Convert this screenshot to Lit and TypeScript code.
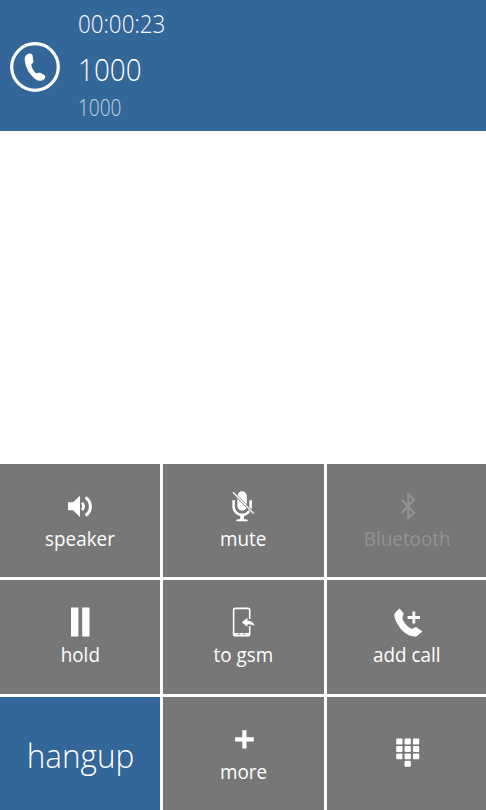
import { LitElement, html, css, svg } from 'lit';
import type { SVGTemplateResult } from 'lit';
import { customElement, property, state } from 'lit/decorators.js';
import { classMap } from 'lit/directives/class-map.js';

const ICONS: Record<string, SVGTemplateResult> = {
  speaker: svg`
    <path d="M12 14.3H17L24 7.8V28.9L17 22.2H12Z" fill="currentColor" />
    <path d="M26 14.6Q29.2 18.3 26 22" stroke="currentColor" stroke-width="2.7" />
    <path d="M29.5 9.5C36 13.4 36 23.4 29.5 27.4" stroke="currentColor" stroke-width="3" />
  `,
  mute: svg`
    <rect x="17.4" y="3.3" width="9.4" height="19.4" rx="4.7" fill="currentColor" />
    <path d="M13.6 12.3V18C13.6 29.8 30.6 29.8 30.6 18V12.3" stroke="currentColor" stroke-width="2.6" />
    <path d="M20.2 26.5H24V31.1L27.6 31.8V33.2H16.4V31.8L20.2 31.1Z" fill="currentColor" />
    <path d="M13 4.3L33.4 25.3" stroke="#777" stroke-width="2.6" />
    <path d="M13 4.3L33.6 25.5" stroke="currentColor" stroke-width="1.3" />
  `,
  bluetooth: svg`
    <path d="M18.6 11.6L31 24.7L25.4 30V6.4L31 11.6L18.6 24.9" stroke="currentColor" stroke-width="2.2" />
  `,
  hold: svg`
    <path d="M15 3.6H22.4V32.5H15ZM26.2 3.6H33.5V32.5H26.2Z" fill="currentColor" />
  `,
  gsm: svg`
    <path d="M29.7 15V6.2Q29.7 4.4 27.9 4.4H15.4Q13.6 4.4 13.6 6.2V30Q13.6 31.8 15.4 31.8H27.9Q29.7 31.8 29.7 30V22" stroke="currentColor" stroke-width="1.6" />
    <path d="M14 29.9H18.6M19.4 29.9H23.8M24.6 29.9H29.5" stroke="currentColor" stroke-width="1.6" />
    <path d="M21.8 18.3L27.4 13.8V16.4Q33 16.6 34.6 21.8Q31.8 20 27.4 20.3V22.8Z" fill="currentColor" />
  `,
  add: svg`
    <path d="M16.6 4.6L11.9 9C11 10.2 11.2 13 12.6 16.3C15.5 23.6 21.8 30.3 28.2 32.1C30.3 32.7 32.6 32.8 33.7 32.2L39.4 27.4L33 22.9L29.2 24.8C26 24.6 19.7 17.5 19.3 13.7L20.8 9.6Z" fill="currentColor" />
    <path d="M24.6 13.5H37M30.8 7.5V19.4" stroke="currentColor" stroke-width="2.8" />
  `,
  more: svg`
    <path d="M15.1 18.4H33.8M24.4 9.2V27.5" stroke="currentColor" stroke-width="4.2" />
  `,
  keypad: svg`
    ${[0, 1, 2, 3, 4, 5, 6, 7, 8, 10].map(
      (i) => svg`<rect
        x=${13.2 + (i % 3) * 8.35}
        y=${17.6 + Math.floor(i / 3) * 7.4}
        width="6.3" height="5.9" rx="1" fill="currentColor" />`
    )}
  `,
};

interface Action {
  icon?: string;
  label: string;
  kind?: 'hangup' | 'disabled';
}

@customElement('call-tile')
export class CallTile extends LitElement {
  @property({ type: String })
  icon = '';

  @property({ type: String })
  label = '';

  @property({ type: String })
  kind = '';

  static styles = css`
    :host {
      display: block;
      min-width: 0;
    }

    .tile {
      box-sizing: border-box;
      width: 100%;
      height: 100%;
      padding: 24px 0 0;
      border: 0;
      display: flex;
      flex-direction: column;
      align-items: center;
      background: #777;
      color: #fff;
      font-family: 'Open Sans', 'Noto Sans', sans-serif;
    }

    .tile.disabled {
      color: #929292;
    }

    .tile.hangup {
      padding: 3px 0 0;
      justify-content: center;
      background: #369;
    }

    .icon {
      display: block;
      flex: none;
      overflow: visible;
    }

    .label {
      font-size: 20.5px;
      line-height: 28px;
      white-space: nowrap;
      transform: scaleX(0.92);
    }

    .hangup .label {
      font-size: 32.5px;
      font-weight: 330;
      line-height: 44px;
      transform: scaleX(0.97);
    }
  `;

  render() {
    return html`
      <button
        class=${classMap({
          tile: true,
          hangup: this.kind === 'hangup',
          disabled: this.kind === 'disabled',
        })}
        ?disabled=${this.kind === 'disabled'}
      >
        ${this.icon
          ? html`<svg class="icon" width="48" height="36" viewBox="0 0 48 36" fill="none">
              ${ICONS[this.icon]}
            </svg>`
          : ''}
        ${this.label ? html`<span class="label">${this.label}</span>` : ''}
      </button>
    `;
  }
}

@customElement('app-root')
export class AppRoot extends LitElement {
  @state()
  private duration = '00:00:23';

  @state()
  private caller = '1000';

  private actions: Action[] = [
    { icon: 'speaker', label: 'speaker' },
    { icon: 'mute', label: 'mute' },
    { icon: 'bluetooth', label: 'Bluetooth', kind: 'disabled' },
    { icon: 'hold', label: 'hold' },
    { icon: 'gsm', label: 'to gsm' },
    { icon: 'add', label: 'add call' },
    { label: 'hangup', kind: 'hangup' },
    { icon: 'more', label: 'more' },
    { icon: 'keypad', label: '' },
  ];

  static styles = css`
    :host {
      display: flex;
      flex-direction: column;
      height: 100vh;
      overflow: hidden;
      background: #fff;
      font-family: 'Open Sans', 'Noto Sans', sans-serif;
    }

    .header {
      box-sizing: border-box;
      height: 130.5px;
      flex: none;
      display: flex;
      gap: 18px;
      padding-left: 10px;
      background: #369;
      color: #fff;
    }

    .avatar {
      flex: none;
      margin-top: 42.3px;
    }

    .info {
      display: flex;
      flex-direction: column;
      align-items: flex-start;
      padding-top: 5px;
      font-weight: 360;
      white-space: nowrap;
    }

    .duration,
    .name,
    .number {
      transform-origin: 0 50%;
    }

    .duration {
      font-size: 25px;
      line-height: 36px;
      transform: scaleX(0.895);
    }

    .name {
      font-size: 32px;
      line-height: 56px;
      transform: scaleX(0.87);
    }

    .number {
      font-size: 23.5px;
      line-height: 20px;
      opacity: 0.7;
      transform: scaleX(0.81);
    }

    .body {
      flex: 1;
    }

    .actions {
      flex: none;
      height: 346.3px;
      display: grid;
      grid-template-columns: repeat(3, 160.4px);
      grid-template-rows: repeat(3, 113.6px);
      gap: 3.2px 3px;
    }
  `;

  render() {
    return html`
      <div class="header">
        <svg class="avatar" width="50" height="50" viewBox="0 0 50 50" fill="none">
          <circle cx="25" cy="25" r="23.3" stroke="#fff" stroke-width="3.2" />
          <path
            d="M19.7 11.6C16.5 12 14.4 14.7 14.7 18C15.4 26.2 20.8 34.8 27.3 38.2C30.4 39.5 34.5 38.5 35.2 35.5C35.4 34.2 34.7 33.1 33.5 32.5L30 30.8C28.6 30.4 27.8 31.4 26.6 31.4C24.4 30.4 21.4 25.6 21.3 22.4C21.9 21.3 23.5 21.1 23.4 19.4L22.7 14.1C22.4 12.3 21.3 11.4 19.7 11.6Z"
            fill="#fff"
          />
        </svg>
        <div class="info">
          <div class="duration">${this.duration}</div>
          <div class="name">${this.caller}</div>
          <div class="number">${this.caller}</div>
        </div>
      </div>
      <div class="body"></div>
      <div class="actions">
        ${this.actions.map(
          (a) => html`
            <call-tile
              .icon=${a.icon ?? ''}
              .label=${a.label}
              .kind=${a.kind ?? ''}
            ></call-tile>
          `
        )}
      </div>
    `;
  }
}
